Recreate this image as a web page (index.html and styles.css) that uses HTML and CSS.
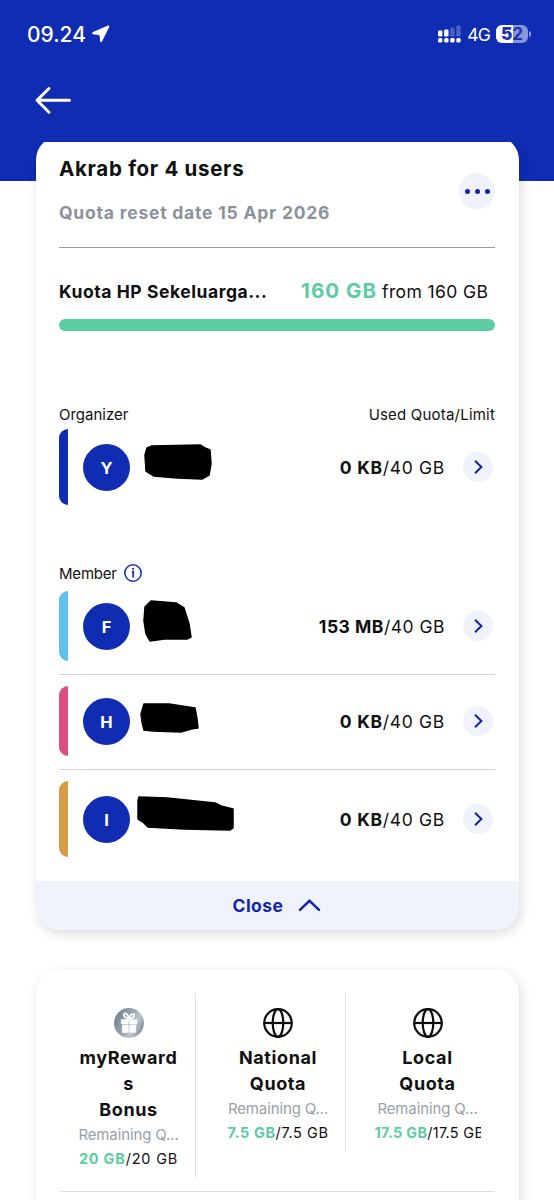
FILE: index.html
```html
<!DOCTYPE html>
<html lang="en">
<head>
<meta charset="utf-8">
<title>Akrab quota</title>
<link rel="stylesheet" href="styles.css">
</head>
<body>
<svg class="defs" width="0" height="0" aria-hidden="true">
  <symbol id="chevron" viewBox="0 0 30 30"><path d="M12 8.8 18.4 15 12 21.2" fill="none" stroke="#1226a6" stroke-width="2"/></symbol>
  <symbol id="globe" viewBox="0 0 32 32"><g fill="none" stroke="#0b0b0b" stroke-width="2.2"><circle cx="16" cy="16" r="13.8"/><ellipse cx="16" cy="16" rx="5.3" ry="13.8"/><path d="M2.2 16h27.6"/></g></symbol>
</svg>
<header class="header">
  <div class="status">
    <span class="time">09.24</span>
    <svg class="location" width="18" height="18" viewBox="0 0 18 18"><path d="M15.9.6 1 7.1Q-.6 8.2 1 9.2l5.6.7q1 .2 1.1 1.2l.3 5q.6 2 2 .5L17.2 2Q17.6.1 15.9.6Z" fill="#fff"/></svg>
    <span class="spacer"></span>
    <svg class="signal" width="24" height="18" viewBox="0 0 24 18"><g fill="#fff"><rect x="0" y="5.5" width="4.4" height="6" rx="1.2"/><rect x="6.1" y="4.5" width="4.4" height="7" rx="1.2"/><rect x="0" y="13" width="4.4" height="4.4" rx="1.5"/><rect x="6.1" y="13" width="4.4" height="4.4" rx="1.5"/><rect x="12.2" y="13" width="4.4" height="4.4" rx="1.5"/><rect x="18.3" y="13" width="4.4" height="4.4" rx="1.5"/></g><g fill="#fff" opacity=".25"><rect x="12.2" y="2.5" width="4.4" height="9" rx="1.2"/><rect x="18.3" y=".5" width="4.4" height="11" rx="1.2"/></g></svg>
    <span class="network">4G</span>
    <span class="battery"><b>5</b><i>2</i></span><span class="battery-tip"></span>
  </div>
  <svg class="back" width="40" height="32" viewBox="0 0 40 32" fill="none" stroke="#fff" stroke-width="3" stroke-linecap="round" stroke-linejoin="round"><path d="M35.5 16.3H4M15 4.5 3 16.3 15 28.2" /></svg>
</header>
<main class="scroll">
  <section class="card plan">
    <div class="plan-head">
      <div>
        <h1 class="title">Akrab for 4 users</h1>
        <p class="reset">Quota reset date 15 Apr 2026</p>
      </div>
      <button class="more"><span></span><span></span><span></span></button>
    </div>
    <div class="quota"><span class="quota-name">Kuota HP Sekeluarga...</span><span class="quota-left">160 GB</span><span class="quota-total">from 160 GB</span></div>
    <div class="progress"></div>
    <div class="labels"><span>Organizer</span><span class="used-label">Used Quota/Limit</span></div>
    <div class="row tall">
      <span class="stripe navy"></span><span class="avatar">Y</span>
      <svg class="mask" width="120" height="76" viewBox="0 0 120 76"><path d="M17 19 22 17 70 16 75 19 80 21 81 35 79 46 72 50 47 49 24 47 16 42 15 26Z"/></svg>
      <span class="usage"><b>0 KB</b>/40 GB</span><svg class="go" width="30" height="30"><use href="#chevron"/></svg>
    </div>
    <div class="labels member"><span class="member-label">Member</span>
      <svg width="20" height="20" viewBox="0 0 20 20"><circle cx="10" cy="10" r="8.2" fill="none" stroke="#1630b5" stroke-width="1.5"/><path d="M8.8 8.6h1.4V14.4" fill="none" stroke="#1630b5" stroke-width="1.7"/><circle cx="10" cy="5.8" r="1.1" fill="#1630b5"/></svg>
    </div>
    <div class="row">
      <span class="stripe sky"></span><span class="avatar">F</span>
      <svg class="mask" width="120" height="70" viewBox="0 0 120 70"><path d="M15 16 21 10 46 12 54 17 59 33 61 46 57 48 34 48 20 50 16 43 14 30Z"/></svg>
      <span class="usage mega"><b>153 MB</b>/40 GB</span><svg class="go" width="30" height="30"><use href="#chevron"/></svg>
    </div>
    <hr class="divider">
    <div class="row">
      <span class="stripe pink"></span><span class="avatar">H</span>
      <svg class="mask" width="120" height="70" viewBox="0 0 120 70"><path d="M14 18 39 18 65 22 67 33 68 42 61 43 51 46 23 45 14 44 12 36 11 28Z"/></svg>
      <span class="usage"><b>0 KB</b>/40 GB</span><svg class="go" width="30" height="30"><use href="#chevron"/></svg>
    </div>
    <hr class="divider">
    <div class="row tall">
      <span class="stripe amber"></span><span class="avatar">I</span>
      <svg class="mask" width="120" height="76" viewBox="0 0 120 76"><path d="M9 16 37 17 85 22 91 25 103 28 103 47 100 49 54 48 18 46 13 41 8 38 8 20Z"/></svg>
      <span class="usage"><b>0 KB</b>/40 GB</span><svg class="go" width="30" height="30"><use href="#chevron"/></svg>
    </div>
    <button class="close"><span>Close</span><svg width="24" height="16" viewBox="0 0 24 16"><path d="M2 11.8 11.5 2.8 21 11.8" fill="none" stroke="#1226a6" stroke-width="2.5" stroke-linecap="round"/></svg></button>
  </section>
  <section class="card benefits">
    <div class="columns">
      <article class="benefit first">
        <svg width="32" height="32" viewBox="0 0 32 32"><defs><linearGradient id="silver" x1="0" y1="0" x2="1" y2=".5"><stop offset="0" stop-color="#687985"/><stop offset=".55" stop-color="#9aa6ae"/><stop offset=".8" stop-color="#bdc6cc"/><stop offset="1" stop-color="#8f9ba4"/></linearGradient></defs><circle cx="16" cy="16" r="15" fill="url(#silver)"/><path d="M8.2 12.5h7.2v4.5H8.2zM16.6 12.5h7.2v4.5h-7.2zM9.3 18h6.1v7.5H9.3zM16.6 18h6.1v7.5h-6.1z" fill="#fff" stroke="#fff" stroke-width=".5" stroke-linejoin="round"/><path d="M16 11.5Q10.5 11 11 7.2 13.5 4.2 16 11.5 18 5.8 21 7.4 22 11 16 11.5" fill="none" stroke="#fff" stroke-width="1.8"/></svg>
        <h2>myReward<br>s<br>Bonus</h2><p class="remaining">Remaining Q...</p><p class="amount"><b>20 GB</b>/20 GB</p>
      </article>
      <article class="benefit second">
        <svg width="32" height="32"><use href="#globe"/></svg>
        <h2>National<br>Quota</h2><p class="remaining">Remaining Q...</p><p class="amount"><b>7.5 GB</b>/7.5 GB</p>
      </article>
      <article class="benefit third">
        <svg width="32" height="32"><use href="#globe"/></svg>
        <h2>Local<br>Quota</h2><p class="remaining">Remaining Q...</p><p class="amount clipped"><b>17.5 GB</b>/17.5 GB</p>
      </article>
    </div>
  </section>
</main>
</body>
</html>
```
FILE: styles.css
```css
* { box-sizing: border-box; }
body { margin: 0; width: 554px; height: 1200px; overflow: hidden; background: #fff; color: #101010; font-family: Inter, "Liberation Sans", sans-serif; }
h1, h2, p { margin: 0; }
button { border: 0; padding: 0; font: inherit; }
svg { display: block; flex: none; }
.defs { position: absolute; }
.header { height: 142px; background: #0f2cb3; color: #fff; }
.status { display: flex; align-items: center; height: 68px; padding: 0 23px 0 27px; }
.time { width: 65px; font-size: 21px; font-weight: 500; letter-spacing: 0; }
.location { margin-top: -1px; }
.spacer { flex: 1; }
.signal { margin-top: -1px; }
.network { margin-left: 5px; font-size: 17.5px; font-weight: 400; letter-spacing: -0.8px; }
.battery { display: flex; justify-content: center; align-items: center; width: 32px; height: 18px; margin-left: 6px; margin-top: -1px; border-radius: 6px; background: linear-gradient(90deg, #fff 52%, #8796dc 52%); color: #1c33b0; font-size: 17px; font-weight: 700; line-height: 18px; }
.battery i { font-style: normal; }
.battery-tip { width: 2px; height: 6px; margin-left: 1px; border-radius: 0 2px 2px 0; background: #8796dc; }
.back { margin: 16px 0 0 34px; }
.scroll { height: 1058px; overflow: hidden; background: linear-gradient(#0f2cb3 39px, #fff 39px); }
.card { width: 483px; margin-left: 35.5px; background: #fff; box-shadow: 2px 4px 12px rgba(0, 0, 0, .14); }
.plan { height: 794px; margin-top: -6px; border-radius: 24px; overflow: hidden; padding: 0 23.5px; }
.plan-head { display: flex; justify-content: space-between; height: 112px; padding-top: 20px; border-bottom: 1.5px solid #9e9ea0; }
.title { font-size: 20.5px; font-weight: 700; line-height: 26px; letter-spacing: .7px; }
.reset { margin-top: 19px; color: #8c929b; font-size: 17.5px; font-weight: 700; line-height: 24px; letter-spacing: .78px; }
.more { display: flex; justify-content: center; align-items: center; gap: 5px; width: 36px; height: 36px; margin-top: 17px; border-radius: 50%; background: #f0f2fc; }
.more span { width: 5px; height: 5px; border-radius: 50%; background: #1226a6; }
.quota { display: flex; align-items: baseline; height: 71px; padding-top: 30px; line-height: 26px; white-space: nowrap; }
.quota-name { width: 242px; font-size: 17.5px; font-weight: 700; letter-spacing: .55px; }
.quota-left { width: 81px; color: #5ccda2; font-size: 20.5px; font-weight: 700; letter-spacing: 1.05px; }
.quota-total { font-size: 17.5px; letter-spacing: .4px; }
.progress { height: 12px; border-radius: 6px; background: #5ccda2; }
.labels { display: flex; justify-content: space-between; align-items: center; height: 20px; margin-top: 73px; margin-bottom: 5px; font-size: 15px; }
.used-label { letter-spacing: .2px; }
.member { justify-content: flex-start; margin: 58px 0 8px; }
.member-label { width: 64px; letter-spacing: -.2px; }
.row { display: flex; align-items: center; height: 70px; }
.tall { height: 76px; }
.stripe { width: 9px; height: 100%; border-radius: 9px 0 0 9px; }
.navy { background: #0f2cb3; }
.sky { background: #60c2ec; }
.pink { background: #dc4e82; }
.amber { background: #d79c47; }
.avatar { width: 47px; height: 47px; margin-left: 15px; border-radius: 50%; background: #0f2cb3; color: #fff; font-size: 16.5px; font-weight: 700; line-height: 48px; text-align: center; }
.mask path { fill: #000; stroke: #000; stroke-width: 1.5; stroke-linejoin: round; }
.usage { width: 195px; padding-top: 1px; text-align: right; font-size: 17.5px; letter-spacing: .7px; white-space: nowrap; }
.mega { letter-spacing: .5px; }
.go { margin-left: 18px; border-radius: 50%; background: #f0f2fc; }
.divider { height: 1px; margin: 13px 0 11px; border: 0; background: #d5d5d7; }
.close { display: flex; align-items: center; width: 483px; height: 49px; margin: 24px -23.5px 0; padding-left: 197px; background: #f0f2fc; color: #1226a6; font-size: 17.5px; font-weight: 700; letter-spacing: .45px; }
.close span { width: 65px; text-align: left; }
.benefits { height: 300px; margin-top: 39px; padding: 24px 23.5px; border-radius: 24px; }
.columns { display: flex; height: 199px; border-bottom: 1.5px solid #e0e0e2; align-items: flex-start; }
.benefit { display: flex; flex-direction: column; align-items: center; padding-top: 14px; }
.first { width: 137px; height: 185px; padding-left: 3px; border-right: 1px solid #dfdfe1; }
.second { width: 150px; height: 159px; padding-left: 15px; border-right: 1px solid #dfdfe1; }
.third { width: 149px; height: 159px; padding-left: 14px; }
.benefit h2 { margin-top: 6px; font-size: 18px; font-weight: 700; line-height: 26px; letter-spacing: .6px; text-align: center; }
.remaining { color: #9b9fa6; font-size: 15px; line-height: 24px; letter-spacing: -.12px; white-space: nowrap; }
.amount { width: 106px; font-size: 14.5px; line-height: 24px; letter-spacing: .6px; text-align: center; white-space: nowrap; overflow: hidden; }
.first .amount { letter-spacing: .8px; }
.amount.clipped { letter-spacing: .28px; text-align: left; }
.amount b { color: #5ccda2; }
```
